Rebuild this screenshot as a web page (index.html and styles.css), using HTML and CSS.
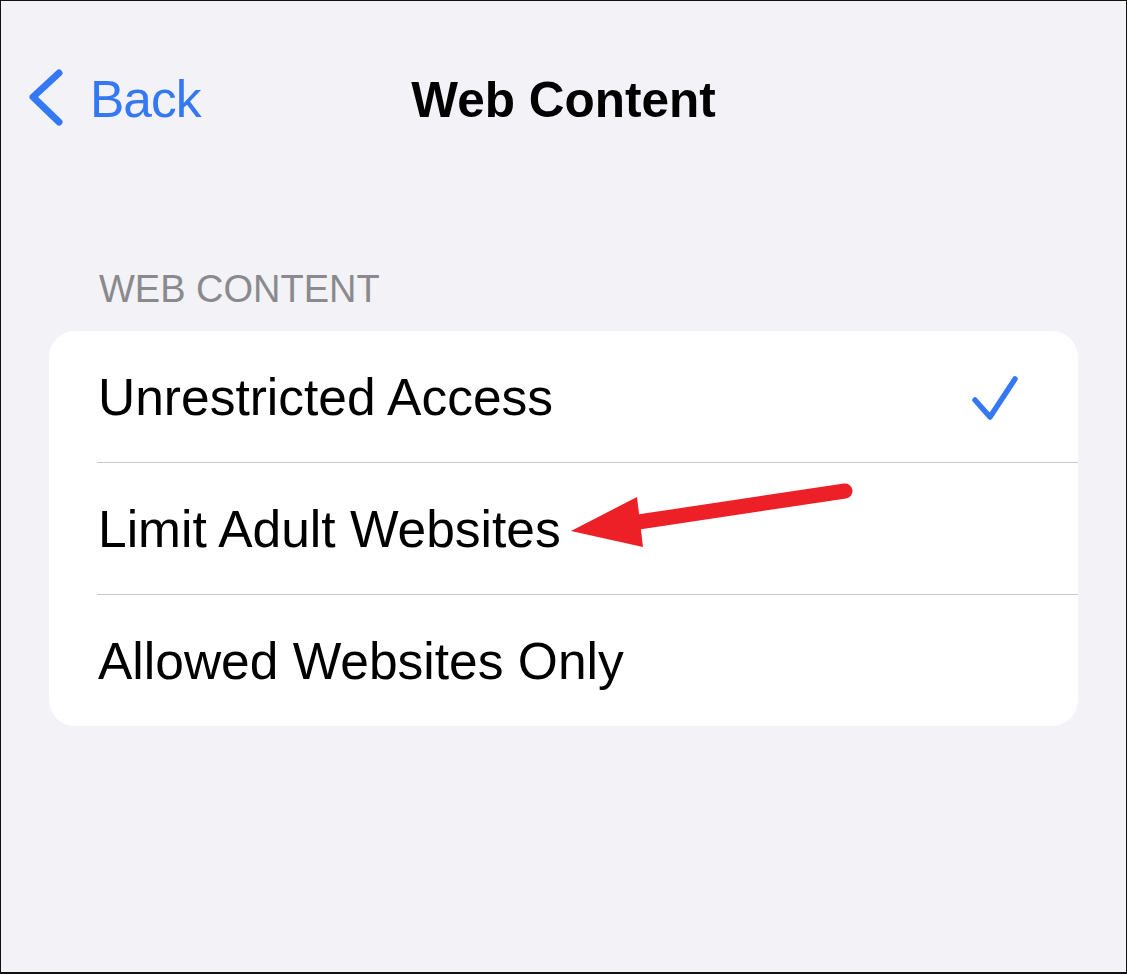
FILE: index.html
```html
<!DOCTYPE html>
<html lang="en">
<head>
<meta charset="utf-8">
<title>Web Content</title>
<link rel="stylesheet" href="styles.css">
</head>
<body>
<div class="frame">
  <header class="nav">
    <a class="back" href="#">
      <svg class="chevron" width="40" height="60" viewBox="0 0 40 60" aria-hidden="true">
        <polyline points="30,4 4,28 30,53" fill="none" stroke="#3478f6" stroke-width="7" stroke-linecap="round" stroke-linejoin="round"/>
      </svg>
      <span>Back</span>
    </a>
    <h1 class="title">Web Content</h1>
    <div class="nav-spacer"></div>
  </header>

  <main class="content">
    <h2 class="section-header">WEB CONTENT</h2>
    <ul class="card">
      <li class="row">
        <span class="row-label">Unrestricted Access</span>
        <svg class="check" width="48" height="48" viewBox="0 0 48 48" aria-hidden="true">
          <polyline points="4,26 19,43 44,5" fill="none" stroke="#3478f6" stroke-width="5.5" stroke-linecap="round" stroke-linejoin="round"/>
        </svg>
      </li>
      <li class="row">
        <span class="row-label">Limit Adult Websites</span>
      </li>
      <li class="row">
        <span class="row-label">Allowed Websites Only</span>
      </li>
    </ul>
  </main>
</div>

<svg class="annotation" width="1127" height="974" viewBox="0 0 1127 974" aria-hidden="true">
  <line x1="845" y1="491" x2="625" y2="524" stroke="#ed1f27" stroke-width="15" stroke-linecap="round"/>
  <polygon points="571,531 637,497 643,547" fill="#ed1f27"/>
</svg>
</body>
</html>
```

FILE: styles.css
```css
* {
  box-sizing: border-box;
}

html, body {
  margin: 0;
  padding: 0;
}

body {
  position: relative;
  width: 1127px;
  height: 974px;
  font-family: "Liberation Sans", Arial, sans-serif;
  background: #f2f2f7;
}

.frame {
  width: 1127px;
  height: 974px;
  border: 1px solid #111;
  border-bottom-width: 2px;
  background: #f2f2f7;
}

.nav {
  height: 195px;
  display: grid;
  grid-template-columns: 1fr auto 1fr;
  align-items: center;
}

.back {
  display: flex;
  align-items: center;
  gap: 21px;
  padding-left: 28px;
  color: #3478f6;
  text-decoration: none;
  font-size: 51.5px;
  letter-spacing: -1px;
  line-height: 1;
  padding-top: 2px;
}

.chevron {
  display: block;
  margin-top: -2px;
}

.title {
  margin: 0;
  font-size: 49.5px;
  font-weight: 700;
  line-height: 1;
  color: #000;
  padding-top: 2px;
}

.content {
  padding: 0 48px;
}

.section-header {
  margin: 74px 0 23px 50px;
  font-size: 38px;
  font-weight: 400;
  line-height: 1;
  color: #8a8a8e;
  letter-spacing: 0;
}

.card {
  list-style: none;
  margin: 0;
  padding: 0;
  background: #fff;
  border-radius: 26px;
  overflow: hidden;
}

.row {
  position: relative;
  height: 131px;
  display: flex;
  align-items: center;
  justify-content: space-between;
  padding: 3px 59px 0 49px;
}

.row + .row {
  height: 132px;
  border-top: 1px solid #c8c8cc;
  margin-left: 48px;
  padding-left: 1px;
}

.row-label {
  font-size: 51.5px;
  line-height: 1;
  color: #000;
}

.check {
  display: block;
}

.annotation {
  position: absolute;
  top: 0;
  left: 0;
  pointer-events: none;
}
```
